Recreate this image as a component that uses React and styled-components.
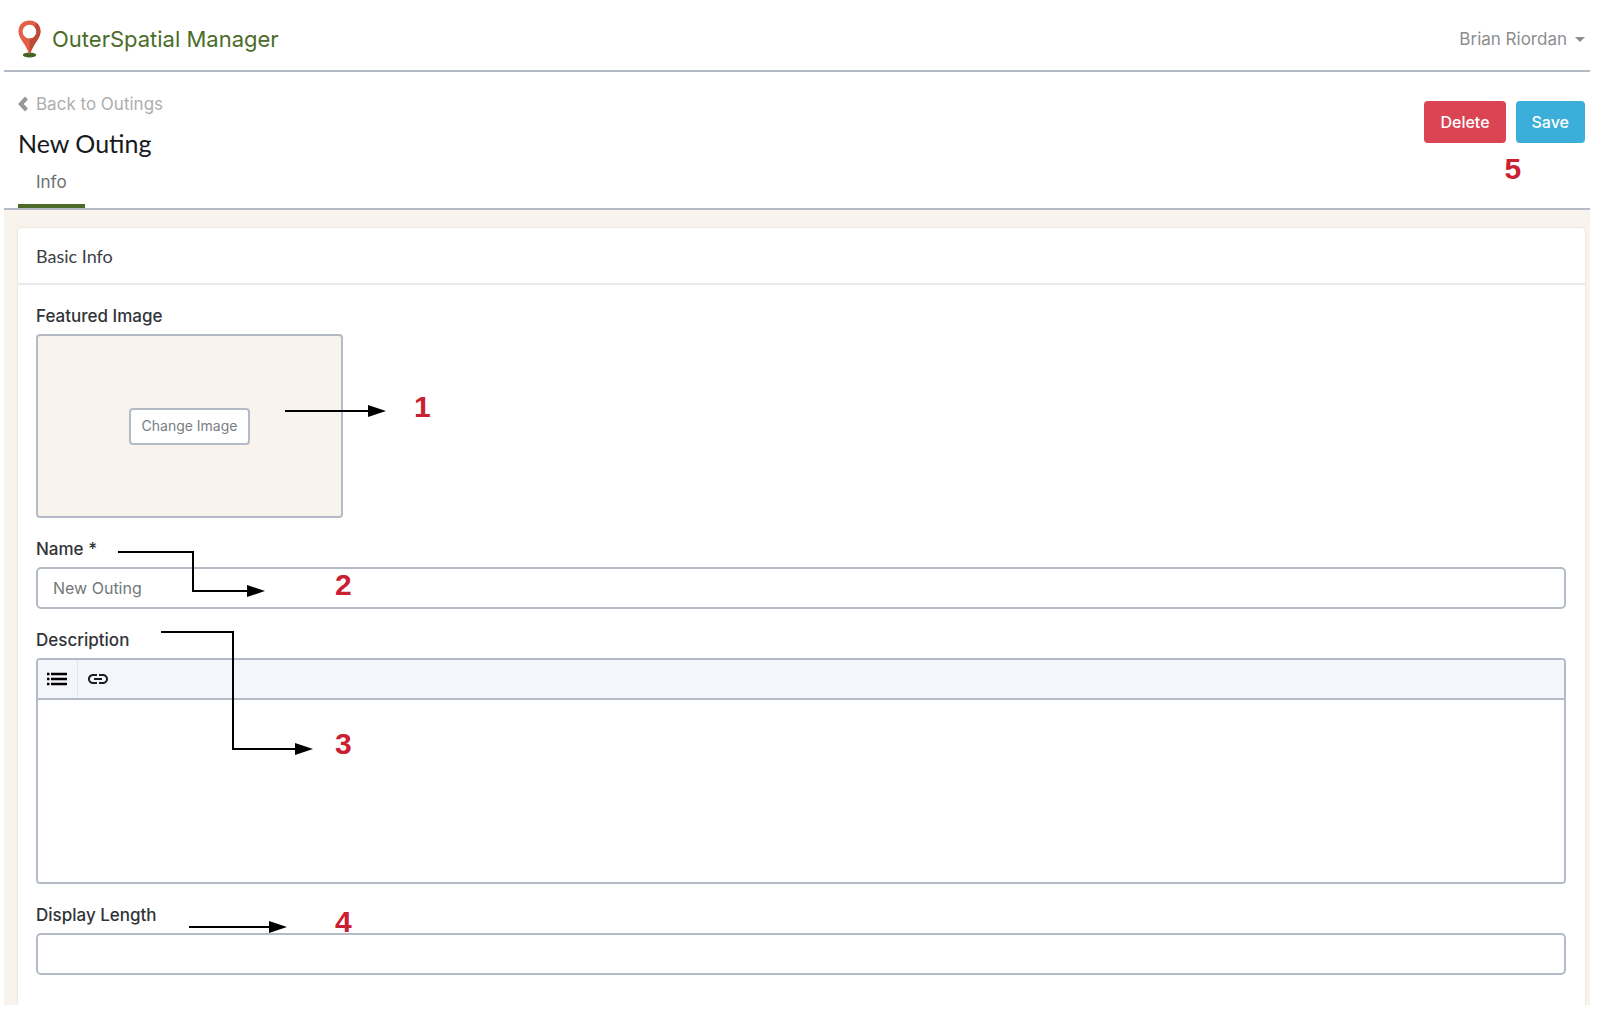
import React from "react";
import styled, { createGlobalStyle } from "styled-components";
import { MdLink } from "react-icons/md";

const line = "#b4bbc7";
const cream = "#f8f3ec";
const green = "#4b6c29";

const GlobalStyle = createGlobalStyle`
  *, *::before, *::after { box-sizing: border-box; }
  body {
    margin: 0;
    background: #fff;
    color: #303438;
    font-family: Inter, "Liberation Sans", sans-serif;
    font-size: 17px;
    line-height: 24px;
  }
  button, input, textarea { font: inherit; }
`;

const Page = styled.div`
  padding: 0 10px 12px 4px;
`;

const TopBar = styled.header`
  display: flex;
  align-items: center;
  justify-content: space-between;
  height: 72px;
  padding: 8px 5px 0 14px;
  border-bottom: 2px solid ${line};
`;

const Brand = styled.a`
  display: flex;
  align-items: center;
  gap: 10px;
  color: ${green};
  font-size: 22px;
  text-decoration: none;
`;

const UserButton = styled.button`
  display: flex;
  align-items: center;
  gap: 8px;
  padding: 0;
  border: 0;
  background: none;
  color: #8c8e90;
`;

const Caret = styled.span`
  border: 5px solid transparent;
  border-top-color: currentColor;
  border-bottom: 0;
`;

const PageHead = styled.section`
  display: flex;
  justify-content: space-between;
  align-items: flex-start;
  padding: 20px 5px 0 14px;
  border-bottom: 2px solid ${line};
`;

const BackLink = styled.a`
  display: flex;
  align-items: center;
  gap: 8px;
  color: #acaeb0;
  text-decoration: none;
`;

const Title = styled.h1`
  margin: 9px 0;
  color: #17191c;
  font-family: Lato, "Open Sans", sans-serif;
  font-size: 25px;
  font-weight: 400;
  line-height: 36px;
`;

const Tabs = styled.nav`
  display: flex;
`;

const Tab = styled.a`
  padding: 0 18px 10px;
  border-bottom: 4px solid ${green};
  color: #6c6f73;
  text-decoration: none;
`;

const Actions = styled.div`
  position: relative;
  display: flex;
  gap: 10px;
  padding-top: 9px;
`;

const ActionButton = styled.button`
  height: 42px;
  padding: 0 16px;
  border: 0;
  border-radius: 4px;
  background: ${(p) => p.$color};
  color: #fff;
  font-size: 16px;
  font-weight: 500;
`;

const Main = styled.main`
  padding: 18px 5px 0 14px;
  background: ${cream};
`;

const Card = styled.form`
  border-radius: 4px 4px 0 0;
  background: #fff;
  box-shadow: 0 0 2px rgba(60, 50, 30, 0.18);
  clip-path: inset(-4px -4px 0 -4px);
`;

const CardTitle = styled.h2`
  margin: 0;
  padding: 16px 18px 15px;
  border-bottom: 2px solid #e6e9ee;
  color: #3b4046;
  font-family: Lato, "Open Sans", sans-serif;
  font-size: 18px;
  font-weight: 400;
`;

const Fields = styled.div`
  display: grid;
  gap: 19px;
  padding: 19px 19px 30px 18px;
`;

const Field = styled.div`
  position: relative;
  display: grid;
  gap: 6px;
`;

const Label = styled.label`
  justify-self: start;
  font-weight: 500;
`;

const ImageBox = styled.div`
  display: grid;
  place-items: center;
  width: 307px;
  height: 184px;
  border: 2px solid ${line};
  border-radius: 4px;
  background: ${cream};
`;

const ChangeButton = styled.button`
  height: 37px;
  padding: 0 11px;
  border: 2px solid ${line};
  border-radius: 4px;
  background: #fff;
  color: #7a7e83;
  font-size: 14px;
`;

const TextInput = styled.input`
  width: 100%;
  height: 42px;
  padding: 0 15px;
  border: 2px solid ${line};
  border-radius: 5px;
  background: #fff;
  color: #73777c;
  font-size: 16px;
`;

const Editor = styled.div`
  overflow: hidden;
  border: 2px solid ${line};
  border-radius: 4px;
`;

const Toolbar = styled.div`
  display: flex;
  height: 40px;
  border-bottom: 2px solid ${line};
  background: #f5f6fb;
`;

const ToolButton = styled.button`
  display: grid;
  place-items: center;
  width: 40px;
  padding: 0;
  border: 0;
  border-right: ${(p) => (p.$divided ? "1px solid #e2e5eb" : "0")};
  background: none;
  color: #1b1d20;
`;

const EditorArea = styled.textarea`
  display: block;
  width: 100%;
  height: 182px;
  padding: 12px 15px;
  border: 0;
  resize: none;
`;

const Arrow = styled.svg`
  position: absolute;
  top: 0;
  left: 0;
  overflow: visible;
  pointer-events: none;
`;

const Marker = styled.span`
  position: absolute;
  left: ${(p) => p.$x}px;
  top: ${(p) => p.$y}px;
  color: #cb2031;
  font-family: "Liberation Sans", sans-serif;
  font-size: 30px;
  font-weight: 700;
  line-height: 30px;
  pointer-events: none;
`;

function Pin() {
  return (
    <svg width="24" height="38" viewBox="0 0 24 38" aria-hidden="true">
      <ellipse cx="11.5" cy="35" rx="6.7" ry="2.4" fill="#426522" />
      <path fillRule="evenodd" fill="#e35f45" d="M11.5 .5C5 .5 .5 5 .5 11.2c0 5.3 3.2 8.8 6 13.4 2 3.4 3.6 6.8 5 10 1.4-3.2 3-6.6 5-10 2.8-4.6 6-8.1 6-13.4C22.5 5 18 .5 11.5 .5Zm0 4.3a6.9 6.9 0 1 1 0 13.8 6.9 6.9 0 0 1 0-13.8Z" />
      <path fill="#be4a35" d="M18.2 2.7c2.7 1.9 4.3 4.9 4.3 8.5 0 5.3-3.2 8.8-6 13.4-2 3.4-3.6 6.8-5 10v-16a6.9 6.9 0 0 0 5-11.7Z" />
    </svg>
  );
}

function Callout({ number, path, tip, x, y }) {
  return (
    <>
      <Arrow width="1" height="1" aria-hidden="true">
        <path d={path} fill="none" stroke="#000" strokeWidth="2" />
        <path d={`M${tip[0]} ${tip[1]}l-18-6v12z`} fill="#000" />
      </Arrow>
      <Marker $x={x} $y={y}>{number}</Marker>
    </>
  );
}

export default function App() {
  return (
    <>
      <GlobalStyle />
      <Page>
        <TopBar>
          <Brand href="#home">
            <Pin />
            OuterSpatial Manager
          </Brand>
          <UserButton type="button">
            Brian Riordan
            <Caret />
          </UserButton>
        </TopBar>

        <PageHead>
          <div>
            <BackLink href="#outings">
              <svg width="10" height="16" viewBox="0 0 10 16" aria-hidden="true">
                <path d="M8.5 2 2.8 8l5.7 6" fill="none" stroke="#96989a" strokeWidth="4" />
              </svg>
              Back to Outings
            </BackLink>
            <Title>New Outing</Title>
            <Tabs>
              <Tab href="#info">Info</Tab>
            </Tabs>
          </div>
          <Actions>
            <ActionButton type="button" $color="#da4453">Delete</ActionButton>
            <ActionButton type="submit" form="outing" $color="#3bafda">Save</ActionButton>
            <Marker $x={80} $y={62}>5</Marker>
          </Actions>
        </PageHead>

        <Main>
          <Card id="outing">
            <CardTitle>Basic Info</CardTitle>
            <Fields>
              <Field>
                <Label htmlFor="image">Featured Image</Label>
                <ImageBox>
                  <ChangeButton id="image" type="button">Change Image</ChangeButton>
                </ImageBox>
                <Callout number="1" path="M249 107H334" tip={[350, 107]} x={378} y={88} />
              </Field>
              <Field>
                <Label htmlFor="name">Name *</Label>
                <TextInput id="name" defaultValue="New Outing" />
                <Callout number="2" path="M82 15H157V54H214" tip={[229, 54]} x={299} y={33} />
              </Field>
              <Field>
                <Label htmlFor="description">Description</Label>
                <Editor>
                  <Toolbar>
                    <ToolButton type="button" aria-label="Bulleted list" $divided>
                      <svg width="21" height="14" viewBox="0 0 21 14" aria-hidden="true">
                        <path d="M0 2h2.5M4 2h16M0 7h2.5M4 7h16M0 12h2.5M4 12h16" stroke="#000" strokeWidth="2.6" />
                      </svg>
                    </ToolButton>
                    <ToolButton type="button" aria-label="Link">
                      <MdLink size={24} />
                    </ToolButton>
                  </Toolbar>
                  <EditorArea id="description" />
                </Editor>
                <Callout number="3" path="M125 4H197V121H262" tip={[277, 121]} x={299} y={101} />
              </Field>
              <Field>
                <Label htmlFor="length">Display Length</Label>
                <TextInput id="length" />
                <Callout number="4" path="M153 24H236" tip={[251, 24]} x={299} y={4} />
              </Field>
            </Fields>
          </Card>
        </Main>
      </Page>
    </>
  );
}
